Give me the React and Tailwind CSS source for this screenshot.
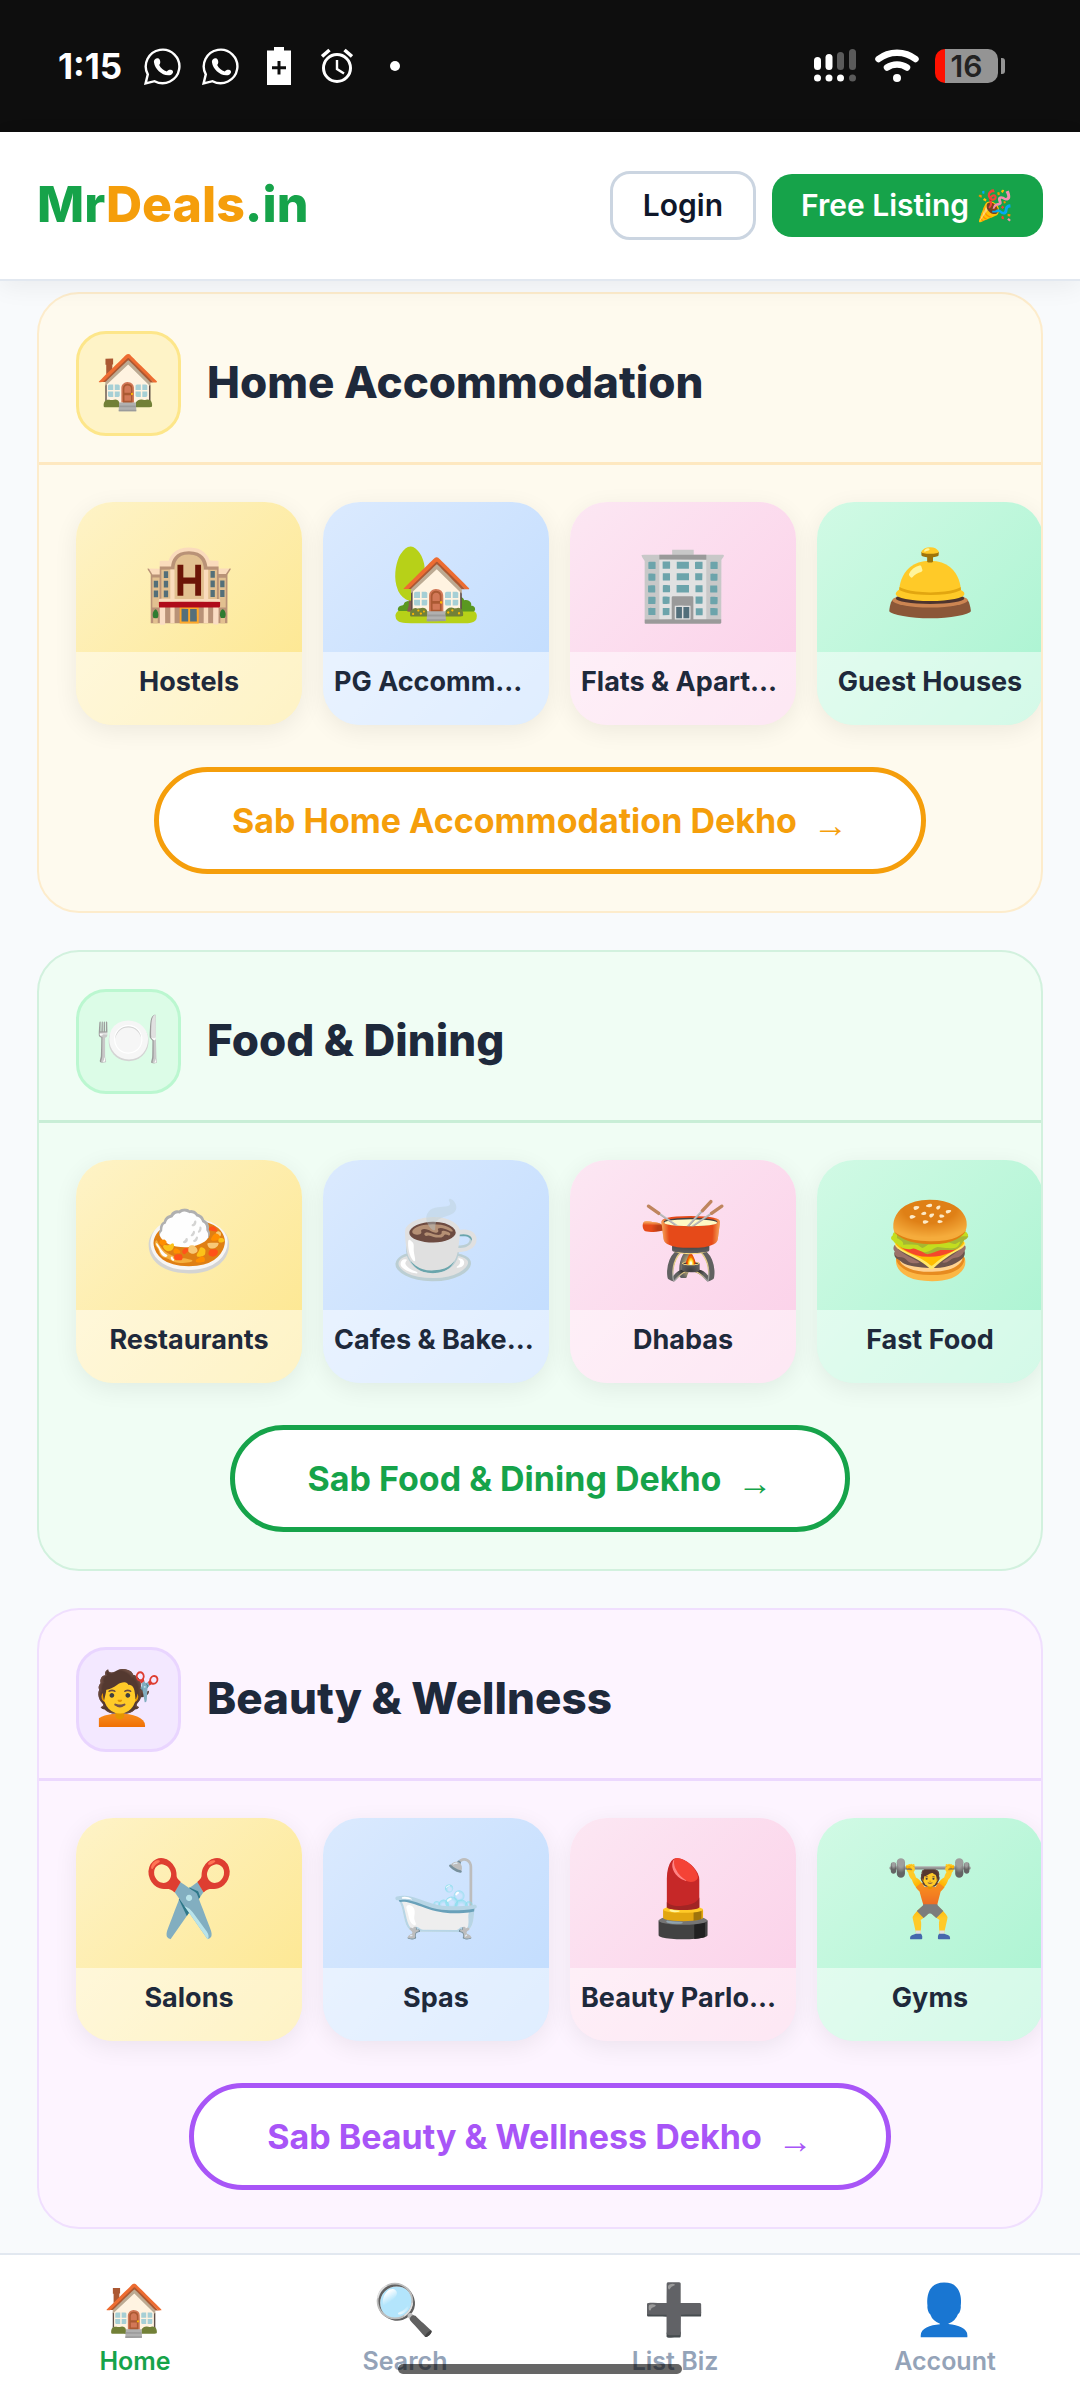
import React, { useState } from "react";

const SECTIONS = [
  {
    id: "home-accommodation",
    icon: "🏠",
    title: "Home Accommodation",
    cta: "Sab Home Accommodation Dekho",
    card: "bg-[#fefaee] border-[#fdeccc]",
    divider: "border-[#fee8c0]",
    iconBox: "bg-[#fef3c7] border-[#fde68a]",
    button: "border-[#f59e0b] text-[#f59e0b]",
    items: [
      { icon: "🏨", label: "Hostels" },
      { icon: "🏡", label: "PG Accommodation" },
      { icon: "🏢", label: "Flats & Apartments" },
      { icon: "🛎️", label: "Guest Houses" },
    ],
  },
  {
    id: "food-dining",
    icon: "🍽️",
    title: "Food & Dining",
    cta: "Sab Food & Dining Dekho",
    card: "bg-[#f0fdf4] border-[#d2f1de]",
    divider: "border-[#c8eed6]",
    iconBox: "bg-[#dcfce7] border-[#bbf7d0]",
    button: "border-[#16a34a] text-[#16a34a]",
    items: [
      { icon: "🍛", label: "Restaurants" },
      { icon: "☕", label: "Cafes & Bakeries" },
      { icon: "🫕", label: "Dhabas" },
      { icon: "🍔", label: "Fast Food" },
    ],
  },
  {
    id: "beauty-wellness",
    icon: "💇",
    title: "Beauty & Wellness",
    cta: "Sab Beauty & Wellness Dekho",
    card: "bg-[#fdf4ff] border-[#f0dffe]",
    divider: "border-[#ecd8fe]",
    iconBox: "bg-[#f3e8ff] border-[#e9d5ff]",
    button: "border-[#a855f7] text-[#a855f7]",
    items: [
      { icon: "✂️", label: "Salons" },
      { icon: "🛁", label: "Spas" },
      { icon: "💄", label: "Beauty Parlours" },
      { icon: "🏋️", label: "Gyms" },
    ],
  },
];

const TILE_COLORS = [
  "from-[#fef3c7] to-[#fde68a]",
  "from-[#dbeafe] to-[#bfdbfe]",
  "from-[#fce7f3] to-[#fbcfe8]",
  "from-[#d1fae5] to-[#a7f3d0]",
];

const NAV_ITEMS = [
  { id: "home", icon: "🏠", label: "Home" },
  { id: "search", icon: "🔍", label: "Search" },
  { id: "list", icon: "➕", label: "List Biz" },
  { id: "account", icon: "👤", label: "Account" },
];

// --- Status bar icons ---
const WhatsAppIcon = () => (
  <svg width="38" height="38" viewBox="0 0 38 38" fill="none" aria-hidden="true">
    <path
      d="M1.600 36.400 L3.800 27.400 A16.800 16.800 0 1 1 10.600 34.200 Z"
      stroke="white"
      strokeWidth="2.400"
      strokeLinejoin="miter"
    />
    <path
      d="M11 12.200c1.400-1.200 3.800-1.200 4.700.6.800 1.700.9 3.700-.5 5.200 1.500 3 4.300 5.400 7.600 6.500 1.100-1.400 2.500-2.100 4.300-1.700 1.500.3 2.300 1.500 1.800 2.900-.6 1.700-2.600 2.700-4.700 2.600-7-.4-13.200-6.400-14.200-12.900-.2-1.300 0-2.400 1-3.200z"
      fill="white"
    />
  </svg>
);

const BatterySaverIcon = () => (
  <svg width="24" height="38" viewBox="0 0 24 38" aria-hidden="true">
    <path
      fill="white"
      fillRule="evenodd"
      d="M7 0h10v3.500h7V38H0V3.500h7zM10.500 14v5.200H5v3h5.500v5.300h3v-5.300H19v-3h-5.500V14z"
    />
  </svg>
);

const AlarmIcon = () => (
  <svg width="32" height="36" viewBox="0 0 32 36" fill="none" stroke="white" aria-hidden="true">
    <circle cx="16" cy="20" r="13.500" strokeWidth="3" />
    <path d="M1 8.500 8.500 2M31 8.500 23.500 2" strokeWidth="3.600" />
    <path d="M16 12v9l7 4.500" strokeWidth="2.400" />
  </svg>
);

const SignalIcon = () => (
  <svg width="42" height="34" viewBox="0 0 42 34" aria-hidden="true">
    <rect x="0" y="8" width="7" height="13" rx="3.500" fill="white" />
    <rect x="11.500" y="5" width="7" height="16" rx="3.500" fill="white" />
    <rect x="23" y="3" width="7" height="18" rx="3.500" fill="#5a5a5a" />
    <rect x="35" y="0" width="7" height="21" rx="3.500" fill="#5a5a5a" />
    <circle cx="3.500" cy="29" r="3.500" fill="white" />
    <circle cx="15" cy="29" r="3.500" fill="white" />
    <circle cx="26.500" cy="29" r="3.500" fill="white" />
    <circle cx="38.500" cy="29" r="3.500" fill="#5a5a5a" />
  </svg>
);

const WifiIcon = () => (
  <svg width="44" height="34" viewBox="0 0 44 34" fill="none" stroke="white" strokeLinecap="round" aria-hidden="true">
    <path d="M3.500 10C14 1.500 30 1.500 40.500 10" strokeWidth="6.500" />
    <path d="M12 18.500c6-4 14-4 20 0" strokeWidth="6.500" />
    <circle cx="22" cy="29" r="4" fill="white" stroke="none" />
  </svg>
);

const StatusBar = () => (
  <div className="flex h-[132px] items-center justify-between bg-[#0e0e0e] pr-[75px] pl-[58px] text-white">
    <div className="flex items-center">
      <span className="w-[86px] text-[35px] leading-none font-bold">1:15</span>
      <div className="flex items-center gap-[20px]">
        <WhatsAppIcon />
        <WhatsAppIcon />
      </div>
      <div className="flex items-center gap-[30px] pl-[27px]">
        <BatterySaverIcon />
        <AlarmIcon />
        <span className="ml-[7px] h-[10px] w-[10px] rounded-full bg-white" />
      </div>
    </div>
    <div className="flex items-center">
      <SignalIcon />
      <div className="pl-[19px]">
        <WifiIcon />
      </div>
      <div className="flex items-center gap-[3px] pl-[16px]">
        <div className="flex h-[34px] w-[63px] items-center justify-center overflow-hidden rounded-[10px] bg-linear-to-r from-[#ff1100] from-16% to-[#949494] to-16% text-[30px] leading-none font-semibold text-[#222]">
          16
        </div>
        <span className="h-[16px] w-[4px] rounded-r-[3px] bg-[#949494]" />
      </div>
    </div>
  </div>
);

// --- Header ---
const Header = () => (
  <header className="relative z-10 flex items-center justify-between border-b-2 border-[#e2e8f0] bg-white px-[37px] py-[39px] shadow-[0_6px_24px_rgba(0,0,0,0.06)]">
    <a href="#home" className="pb-1 text-[50px] leading-none font-extrabold text-[#16a34a]">
      Mr<span className="text-[#f59e0b]">Deals</span>.in
    </a>
    <div className="flex items-center gap-4">
      <button type="button" className="h-[69px] rounded-[20px] border-3 border-[#cbd5e1] px-[30px] text-[30px] font-semibold text-[#0f172a]">
        Login
      </button>
      <button type="button" className="h-[63px] rounded-[20px] bg-[#16a34a] px-[29px] text-[30px] font-semibold text-white">
        Free Listing 🎉
      </button>
    </div>
  </header>
);

// --- Category section ---
const CategoryTile = ({ icon, label, color }) => (
  <a
    href="#category"
    className={`flex w-[226px] shrink-0 flex-col overflow-hidden rounded-[37px] bg-linear-135 shadow-[0_6px_24px_rgba(0,0,0,0.07)] ${color}`}
  >
    <span className="flex h-[150px] items-center justify-center pt-2 text-[74px] leading-none">{icon}</span>
    <span className="h-[73px] truncate bg-white/50 px-[11px] pt-[13px] text-center text-[27px] leading-[34px] font-bold text-[#1e293b]">
      {label}
    </span>
  </a>
);

const CategorySection = ({ section }) => (
  <section className={`overflow-hidden rounded-[42px] border-2 ${section.card}`}>
    <div className={`flex items-center gap-[26px] border-b-3 px-[37px] pt-[37px] pb-[26px] ${section.divider}`}>
      <div className={`flex h-[105px] w-[105px] items-center justify-center rounded-[30px] border-3 pb-1 text-[53px] leading-none ${section.iconBox}`}>
        {section.icon}
      </div>
      <h2 className="pb-1 text-[44px] leading-[54px] font-extrabold text-[#1e293b]">{section.title}</h2>
    </div>
    <div className="flex gap-[21px] overflow-hidden pt-[37px] pb-[42px] pl-[37px]">
      {section.items.map((item, i) => (
        <CategoryTile key={item.label} {...item} color={TILE_COLORS[i]} />
      ))}
    </div>
    <div className="flex justify-center pb-[37px]">
      <button
        type="button"
        className={`flex h-[107px] items-center gap-[16px] rounded-full border-5 bg-white px-[73px] text-[34px] font-bold ${section.button}`}
      >
        {section.cta}
        <span className="pt-2 font-['Liberation_Sans',sans-serif] text-[35px] leading-none">→</span>
      </button>
    </div>
  </section>
);

// --- Bottom navigation ---
const BottomNav = ({ active, onChange }) => (
  <nav className="relative grid h-[147px] grid-cols-4 border-t-2 border-[#e2e8f0] bg-white">
    {NAV_ITEMS.map(({ id, icon, label }) => (
      <button
        key={id}
        type="button"
        onClick={() => onChange(id)}
        className={`flex flex-col items-center gap-2 pt-[25px] text-[25px] font-semibold ${active === id ? "text-[#16a34a]" : "text-[#94a3b8]"}`}
      >
        <span className="text-[50px] leading-[58px]">{icon}</span>
        <span className="leading-[30px]">{label}</span>
      </button>
    ))}
    {/* System gesture bar */}
    <div className="pointer-events-none absolute inset-x-0 bottom-[26px] flex justify-center">
      <span className="h-[10px] w-[284px] rounded-full bg-black/60" />
    </div>
  </nav>
);

const App = () => {
  const [active, setActive] = useState("home");

  return (
    <div className="flex min-h-screen flex-col bg-[#f8fafc] font-['Inter','Noto_Color_Emoji',sans-serif]">
      <StatusBar />
      <Header />
      <main className="flex grow flex-col gap-[37px] px-[37px] pt-[11px] pb-[24px]">
        {SECTIONS.map((section) => (
          <CategorySection key={section.id} section={section} />
        ))}
      </main>
      <BottomNav active={active} onChange={setActive} />
    </div>
  );
};

export default App;
